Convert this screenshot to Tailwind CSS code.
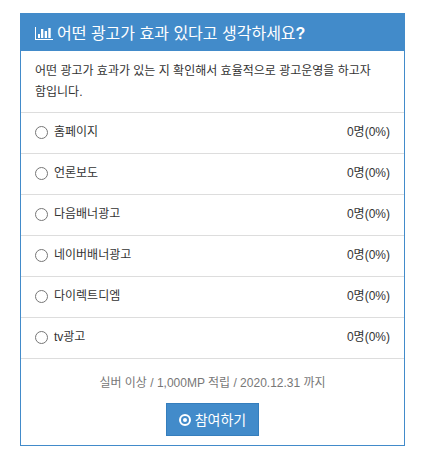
<!DOCTYPE html>
<html lang="ko">

<head>
    <meta charset="UTF-8">
    <meta name="viewport" content="width=device-width, initial-scale=1.0">
    <title>설문조사</title>
    <script src="https://cdn.jsdelivr.net/npm/@tailwindcss/browser@4"></script>
</head>

<body class="bg-white pt-[13px] pl-5 pr-[17px] pb-1 font-['Liberation_Sans','Noto_Sans_CJK_KR',sans-serif] text-xs text-[#333]">
    <form class="border border-[#428bca]">
        <h1 class="flex items-center gap-1 bg-[#428bca] h-[37px] px-[14px] pt-0.5 text-base font-normal text-white whitespace-nowrap">
            <svg class="w-[18px] h-4 shrink-0" viewBox="0 0 18 16" fill="currentColor" aria-hidden="true">
                <path d="M0 1h1v12h17v1H0z" />
                <path d="M3 8h2v4H3zM6 3h2.300v9H6zM9.700 5H12v7H9.700zM13.300 2h2.400v10h-2.400z" />
            </svg>
            <span>어떤 광고가 효과 있다고 생각하세요<b>?</b></span>
        </h1>
        <p class="px-[14px] pt-[10px] pb-[9px] leading-[21px] break-keep">어떤 광고가 효과가 있는 지 확인해서 효율적으로 광고운영을 하고자 함입니다.</p>
        <ul>
            <li class="flex items-center justify-between h-[41px] px-[14px] pb-0.5 border-t border-[#ddd]">
                <label class="flex items-center gap-[6px]"><input class="w-[13px] h-[13px]" type="radio" name="poll"> 홈페이지</label>
                <span>0명(0%)</span>
            </li>
            <li class="flex items-center justify-between h-[41px] px-[14px] pb-0.5 border-t border-[#ddd]">
                <label class="flex items-center gap-[6px]"><input class="w-[13px] h-[13px]" type="radio" name="poll"> 언론보도</label>
                <span>0명(0%)</span>
            </li>
            <li class="flex items-center justify-between h-[41px] px-[14px] pb-0.5 border-t border-[#ddd]">
                <label class="flex items-center gap-[6px]"><input class="w-[13px] h-[13px]" type="radio" name="poll"> 다음배너광고</label>
                <span>0명(0%)</span>
            </li>
            <li class="flex items-center justify-between h-[41px] px-[14px] pb-0.5 border-t border-[#ddd]">
                <label class="flex items-center gap-[6px]"><input class="w-[13px] h-[13px]" type="radio" name="poll"> 네이버배너광고</label>
                <span>0명(0%)</span>
            </li>
            <li class="flex items-center justify-between h-[41px] px-[14px] pb-0.5 border-t border-[#ddd]">
                <label class="flex items-center gap-[6px]"><input class="w-[13px] h-[13px]" type="radio" name="poll"> 다이렉트디엠</label>
                <span>0명(0%)</span>
            </li>
            <li class="flex items-center justify-between h-[41px] px-[14px] pb-0.5 border-t border-[#ddd]">
                <label class="flex items-center gap-[6px]"><input class="w-[13px] h-[13px]" type="radio" name="poll"> tv광고</label>
                <span>0명(0%)</span>
            </li>
        </ul>
        <div class="flex flex-col items-center border-t border-[#ddd] pt-[14px] pb-[9px]">
            <p class="leading-[21px] text-[#777]">실버 이상 / 1,000MP 적립 / 2020.12.31 까지</p>
            <button class="flex items-center gap-1 mt-[9px] h-[33px] px-3 bg-[#428bca] border border-[#357ebd] text-sm text-white" type="button">
                <svg class="w-3 h-3" viewBox="0 0 12 12" aria-hidden="true">
                    <circle cx="6" cy="6" r="5" fill="none" stroke="currentColor" stroke-width="2" />
                    <circle cx="6" cy="6" r="2" fill="currentColor" />
                </svg>
                참여하기
            </button>
        </div>
    </form>
</body>

</html>
